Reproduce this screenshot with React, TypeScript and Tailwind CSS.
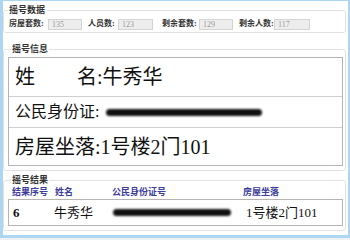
import React from 'react';

const cjk = "font-['Liberation_Serif','Noto_Sans_CJK_SC',serif]";

const stats = [
  { label: '房屋套数:', value: '135', lw: 'w-[39px]', iw: 'w-[34px]' },
  { label: '人员数:', value: '123', lw: 'w-[30px]', iw: 'w-[35px]' },
  { label: '剩余套数:', value: '129', lw: 'w-[37px]', iw: 'w-[34px]' },
  { label: '剩余人数:', value: '117', lw: 'w-[35px]', iw: 'w-[36px]' },
];

function Redacted({ className }: { className: string }) {
  return <div className={`h-[7px] rounded-full bg-[#111] blur-[1px] ${className}`} />;
}

export default function App() {
  return (
    <div className="w-[350px] h-[240px] bg-[#eef2f5]">
      <div className={`h-[238px] border-l-[3px] border-t-[1px] border-r-2 border-b-[3px] border-[#acd6f1] bg-white ${cjk}`}>
        {/* 摇号数据 */}
        <fieldset className="mt-[3px] w-[343px] border border-[#e2e2e2] rounded-[3px] px-[5px]">
          <legend className="text-[9px] leading-[12px] font-bold text-[#333] px-[1px] -ml-[1px]">摇号数据</legend>
          <div className="h-[16px] flex items-center text-[8px] font-bold text-[#333]">
            {stats.map((s, i) => (
              <div key={s.label} className={`flex items-center ${i > 0 ? (i === 2 ? 'ml-[9px]' : 'ml-[6px]') : ''}`}>
                <span className={s.lw}>{s.label}</span>
                <div className={`${s.iw} h-[11px] bg-[#ededed] border border-[#d4d4d4] text-[8px] leading-[9px] font-normal text-[#9a9a9a] pl-[3px]`}>
                  {s.value}
                </div>
              </div>
            ))}
          </div>
        </fieldset>

        {/* 摇号信息 */}
        <fieldset className="mt-[10px] w-[343px] border border-[#e2e2e2] rounded-[3px] pl-[4px] pb-[4px]">
          <legend className="text-[9px] leading-[12px] font-bold text-[#333] px-[1px] ml-[3px]">摇号信息</legend>
          <div className="mt-[2px] w-[335px] border border-[#b4b4b4] text-[#111]">
            <div className="h-[39px] flex items-center pl-[6px] text-[20px] border-b border-[#cfcfcf]">
              <span>姓</span>
              <span className="ml-[42px]">名</span>
              <span>:</span>
              <span>牛秀华</span>
            </div>
            <div className="h-[31px] flex items-center pl-[6px] text-[16px] border-b border-[#cfcfcf]">
              <span>公民身份证:</span>
              <Redacted className="ml-[7px] w-[156px]" />
            </div>
            <div className="h-[37px] flex items-center pl-[6px] text-[20px]">
              <span>房屋坐落:1号楼2门101</span>
            </div>
          </div>
        </fieldset>

        {/* 摇号结果 */}
        <fieldset className="mt-[3px] w-[343px] border border-[#e2e2e2] rounded-[3px] pl-[4px] pb-[4px]">
          <legend className="text-[9px] leading-[12px] font-bold text-[#333] px-[1px] ml-[3px]">摇号结果</legend>
          <div className="h-[13px] flex items-center text-[9px] font-bold text-[#3c3c9c]">
            <span className="ml-[4px] w-[43px]">结果序号</span>
            <span className="w-[57px]">姓名</span>
            <span className="w-[131px]">公民身份证号</span>
            <span>房屋坐落</span>
          </div>
          <div className="w-[335px] h-[27px] border border-[#b4b4b4] flex items-center text-[13px] text-[#111]">
            <span className="ml-[4px] w-[41px] font-bold">6</span>
            <span className="w-[59px]">牛秀华</span>
            <Redacted className="w-[118px]" />
            <span className="ml-[15px]">1号楼2门101</span>
          </div>
        </fieldset>
      </div>
    </div>
  );
}
